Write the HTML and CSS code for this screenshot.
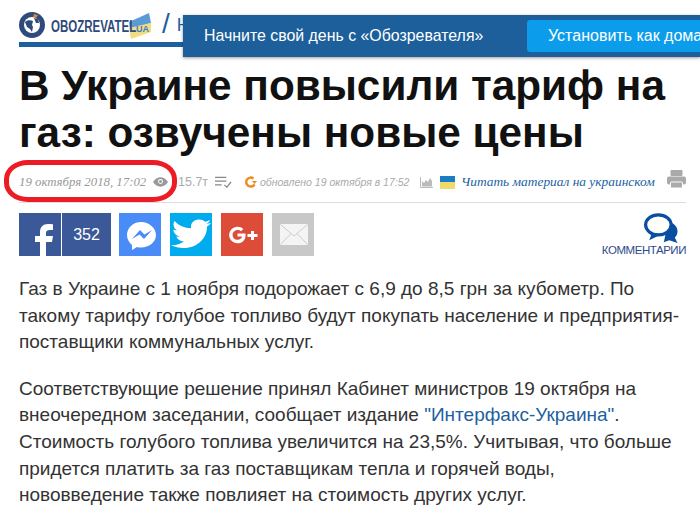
FILE: index.html
```html
<!DOCTYPE html>
<html lang="ru">
<head>
    <meta charset="UTF-8">
    <title>В Украине повысили тариф на газ</title>
    <link rel="stylesheet" href="styles.css">
</head>
<body>
    <!-- Header -->
    <div class="header">
        <svg class="logo-globe" viewBox="0 0 26 26">
            <circle cx="13" cy="13" r="13" fill="#2f4a7c"/>
            <circle cx="13" cy="13" r="8" fill="#fff"/>
            <path d="M6 10c2-2 6-2 8-1l-1 4 1 2-1 5-2-3-3-2zM15 6l4 1 1 4-3 0z" fill="#2f4a7c"/>
            <path d="M15 2l4 1-2 3-3-1z" fill="#e8862c"/>
        </svg>
        <span class="logo-name">OBOZREVATEL</span>
        <svg class="logo-flag" viewBox="0 0 24 26">
            <path d="M1 9L21 0l2 10L2 16z" fill="#5b9bd5"/>
            <path d="M1 15l22-5 0 9L3 26z" fill="#f2dc83"/>
            <text x="8" y="19" class="logo-ua">UA</text>
        </svg>
        <span class="header-slash">/</span>
        <span class="header-section">Н</span>
    </div>

    <!-- Banner over header -->
    <div class="banner">
        <span class="banner-text">Начните свой день с «Обозревателя»</span>
        <span class="banner-btn">Установить как домашнюю</span>
    </div>

    <div class="article">
        <h1>В Украине повысили тариф на газ: озвучены новые цены</h1>

        <div class="meta">
            <span class="meta-date">19 октября 2018, 17:02</span>
            <svg class="icon-eye" viewBox="0 0 16 10">
                <path d="M0 5c2-3 5-5 8-5s6 2 8 5c-2 3-5 5-8 5S2 8 0 5z" fill="#9a9a9a"/>
                <circle cx="8" cy="4.500" r="2.600" fill="#fff"/>
                <circle cx="8" cy="4.500" r="1.600" fill="#9a9a9a"/>
            </svg>
            <span class="meta-views">15.7т</span>
            <svg class="icon-list" viewBox="0 0 18 12">
                <path d="M0 1h12M0 5h12M0 9h7" stroke="#888" stroke-width="1.300" fill="none"/>
                <path d="M10 9l2.500 2.500L17 6" stroke="#888" stroke-width="1.300" fill="none"/>
            </svg>
            <svg class="icon-update" viewBox="0 0 12 12">
                <path d="M9.500 8.500A4.500 4.500 0 1 1 8.500 2.500" stroke="#f08a1d" stroke-width="2.400" fill="none"/>
                <path d="M7 5h5L9.500 8z" fill="#f08a1d"/>
            </svg>
            <span class="meta-updated">обновлено 19 октября в 17:52</span>
            <svg class="icon-chart" viewBox="0 0 13 11">
                <path d="M.5 0v10.500H13" stroke="#bbb" fill="none"/>
                <path d="M2 9.500V4l2 2 2-3 2 2 2-4 2 3v5.500z" fill="#bbb"/>
            </svg>
            <span class="flag"></span>
            <a class="meta-link" href="#">Читать материал на украинском</a>
            <svg class="icon-print" viewBox="0 0 19 18">
                <rect x="3.500" y="0" width="12" height="6" rx="1" fill="#aaa"/>
                <rect x="0" y="6.500" width="19" height="8" rx="2" fill="#aaa"/>
                <rect x="3.500" y="12" width="12" height="6" rx="1" fill="#aaa" stroke="#fff"/>
            </svg>
        </div>

        <div class="share">
            <div class="share-fb">
                <span class="share-btn fb">
                    <svg viewBox="0 0 42 43"><path d="M21 43V29h-5v-6h5v-4c0-5 3-8 8-8 2 0 4 .200 5 .300V17h-3c-3 0-4 1-4 3v3h7l-1 6h-6v14z" fill="#fff"/></svg>
                </span>
                <span class="share-count">352</span>
            </div>
            <span class="share-btn messenger">
                <svg viewBox="0 0 42 43">
                    <path d="M22 9C14 9 8 15 8 22c0 4 2 7.500 5 10v5l5-3c1.300.400 2.600.600 4 .600 8 0 15-5.600 15-12.600S30 9 22 9z" fill="#fff"/>
                    <path d="M13 26l8-9 4.500 4.500L33 17l-8 9-4.500-4.500z" fill="#4a8cf7"/>
                </svg>
            </span>
            <span class="share-btn twitter">
                <svg viewBox="0 0 42 43"><path transform="translate(0 .9) scale(1 .875)" d="M41 10c-1.500.700-3 1-4.500 1.300 1.500-1 3-2.500 3.500-4.300-1.500 1-3.500 1.600-5 2-1.500-1.500-3.500-2.500-6-2.500-4.500 0-8 3.600-8 8 0 .600 0 1.200.200 1.800C14.500 16 8.500 13 4.500 8c-.700 1.200-1 2.600-1 4 0 2.800 1.400 5.300 3.600 6.700-1.300 0-2.600-.400-3.700-1 0 4 2.800 7.200 6.500 8-1.200.300-2.400.400-3.600.100 1 3.200 4 5.500 7.500 5.600C10 34.500 5.500 36 1 35.500 4.600 37.800 9 39 13.500 39c15 0 23.500-12.700 23.500-23.500v-1c1.600-1.200 3-2.800 4-4.500z" fill="#fff"/></svg>
            </span>
            <span class="share-btn gplus">
                <svg viewBox="0 0 42 43">
                    <path transform="translate(4.950 5.830) scale(.77)" d="M15 14.500c2 0 3.500.700 4.500 1.700l3-3c-2-1.800-4.500-2.900-7.500-2.900-6 0-10.800 4.800-10.800 10.700S9 31.700 15 31.700c6.500 0 10.500-4.500 10.500-10.500 0-.800 0-1.500-.200-2.200H15v4h6c-.500 2.400-2.700 4.300-6 4.300-3.600 0-6.400-2.900-6.400-6.300s2.800-6.500 6.400-6.500z" fill="#fff"/>
                    <path d="M30 18h3v3h3.500v3H33v3h-3v-3h-3.500v-3H30z" fill="#fff"/>
                </svg>
            </span>
            <span class="share-btn mail">
                <svg viewBox="0 0 42 43">
                    <rect x="8" y="11" width="28" height="21" rx="1.500" fill="#f4f4f4"/>
                    <path d="M9 12l13 11 13-11M9 31l10-10.500M35 31L25 20.500" stroke="#ccc" stroke-width="1" fill="none"/>
                </svg>
            </span>
            <div class="comments">
                <svg viewBox="0 0 40 34">
                    <path d="M27 9c6 2 10 6 10 11 0 4-2 6-3 7l3 6-9-3-6 2" fill="#0a4ea2"/>
                    <ellipse cx="16" cy="13" rx="14" ry="11" fill="#fff" stroke="#0a4ea2" stroke-width="3.500"/>
                    <path d="M9 22l-3 8 10-5z" fill="#0a4ea2"/>
                </svg>
                <span class="comments-label">КОММЕНТАРИИ</span>
            </div>
        </div>

        <div class="text">
            <p>Газ в Украине с 1 ноября подорожает с 6,9 до 8,5 грн за кубометр. По такому тарифу голубое топливо будут покупать население и предприятия-поставщики коммунальных услуг.</p>
            <p>Соответствующие решение принял Кабинет министров 19 октября на внеочередном заседании, сообщает издание <a href="#">"Интерфакс-Украина"</a>. Стоимость голубого топлива увеличится на 23,5%. Учитывая, что больше придется платить за газ поставщикам тепла и горячей воды, нововведение также повлияет на стоимость других услуг.</p>
        </div>
    </div>

    <!-- Red marker around the date -->
    <div class="marker"></div>
</body>
</html>
```

FILE: styles.css
```css
/* General Styles */
html, body {
    height: 518px;
    overflow: hidden;
}

body {
    margin: 0;
    background: #fff;
    color: #111;
    font-family: "Liberation Sans", Arial, sans-serif;
}

/* Header */
.header {
    display: flex;
    align-items: center;
    height: 42px;
    margin-left: 19px;
    border-bottom: 5px solid #1d5f9f;
    width: 300px;
    overflow: hidden;
}

.logo-globe {
    width: 26px;
    height: 26px;
    margin-top: 8px;
    flex-shrink: 0;
}

.logo-name {
    width: 80px;
    margin: 11px 0 0 6px;
    font-size: 16px;
    font-weight: bold;
    color: #2f4a7c;
    transform: scaleX(0.72);
    transform-origin: left;
    white-space: nowrap;
    flex-shrink: 0;
}

.logo-flag {
    width: 24px;
    height: 26px;
    margin: 9px 0 0 -3px;
    flex-shrink: 0;
}

.logo-ua {
    font-size: 9px;
    font-weight: bold;
    fill: #3d7fc1;
}

.header-slash {
    margin: 6px 0 0 10px;
    font-size: 28px;
    color: #1d5f9f;
}

.header-section {
    margin: 8px 0 0 7px;
    font-size: 18px;
    color: #1d5f9f;
}

/* Banner */
.banner {
    position: absolute;
    top: 15px;
    left: 183px;
    right: 0;
    height: 42px;
    display: flex;
    align-items: center;
    background: #1c5f9b;
    box-shadow: 0 1px 3px rgba(0, 0, 0, 0.4);
    overflow: hidden;
    white-space: nowrap;
}

.banner-text {
    flex-shrink: 0;
    width: 323px;
    margin-left: 21px;
    font-size: 15.900px;
    color: #fff;
}

.banner-btn {
    display: block;
    flex-shrink: 0;
    height: 32px;
    line-height: 32px;
    padding: 0 21px;
    border-radius: 3px;
    background: #0b9deb;
    color: #fff;
    font-size: 16px;
}

/* Article */
.article {
    margin: 0 14px 0 19px;
}

h1 {
    margin: 15px 0 0;
    font-size: 42.300px;
    line-height: 47px;
    font-weight: bold;
    color: #111;
}

/* Meta row */
.meta {
    display: flex;
    align-items: center;
    box-sizing: border-box;
    height: 47px;
    padding-top: 6px;
    border-bottom: 1px solid #ddd;
    color: #aaa;
    white-space: nowrap;
}

.meta-date {
    width: 134px;
    flex-shrink: 0;
    font-family: "Liberation Serif", serif;
    font-style: italic;
    font-size: 12.800px;
    color: #999;
}

.icon-eye {
    width: 15px;
    height: 10px;
    flex-shrink: 0;
}

.meta-views {
    width: 26px;
    margin-left: 10px;
    font-size: 12.500px;
}

.icon-list {
    width: 17px;
    height: 12px;
    margin-left: 11px;
}

.icon-update {
    width: 12px;
    height: 12px;
    margin-left: 13px;
}

.meta-updated {
    width: 150px;
    margin-left: 3px;
    font-size: 10.500px;
    font-style: italic;
}

.icon-chart {
    width: 13px;
    height: 11px;
    margin-left: 10px;
}

.flag {
    width: 15px;
    height: 13px;
    margin-left: 7px;
    background: linear-gradient(#1c7ec2 50%, #f2d96b 50%);
}

.meta-link {
    margin-left: 6px;
    font-family: "Liberation Serif", serif;
    font-style: italic;
    font-size: 13.400px;
    color: #1d5f9f;
    text-decoration: none;
}

.icon-print {
    width: 19px;
    height: 18px;
    margin-left: auto;
    margin-top: -6px;
}

/* Share buttons */
.share {
    display: flex;
    margin-top: 10px;
    height: 43px;
}

.share-fb {
    display: flex;
    margin-right: 8px;
}

.share-btn {
    display: block;
    width: 42px;
    height: 43px;
    margin-right: 9px;
}

.share-btn svg {
    display: block;
    width: 42px;
    height: 43px;
}

.fb {
    margin-right: 1px;
    background: #3b5998;
    overflow: hidden;
}

.share-count {
    width: 49px;
    height: 43px;
    line-height: 43px;
    text-align: center;
    background: #3b5998;
    color: #fff;
    font-size: 16px;
}

.messenger { background: #4a8cf7; }
.twitter { background: #00aced; }
.gplus { background: #dd4b39; }
.mail { background: #c8c8c8; }

.comments {
    display: flex;
    flex-direction: column;
    align-items: flex-end;
    margin-left: auto;
}

.comments svg {
    width: 40px;
    height: 34px;
    margin-right: 4px;
}

.comments-label {
    font-size: 11.500px;
    line-height: 12px;
    letter-spacing: -0.45px;
    color: #2f4a8c;
}

/* Article text */
.text {
    margin-top: 20px;
    padding-right: 2px;
    font-size: 19px;
    line-height: 26.600px;
    color: #333;
}

.text p {
    margin: 0 0 20px;
}

.text a {
    color: #1d5f9f;
    text-decoration: none;
}

/* Red marker */
.marker {
    position: absolute;
    top: 160px;
    left: 4px;
    width: 163px;
    height: 32px;
    border: 5px solid #ed1c24;
    border-radius: 24px / 19px;
}
```
